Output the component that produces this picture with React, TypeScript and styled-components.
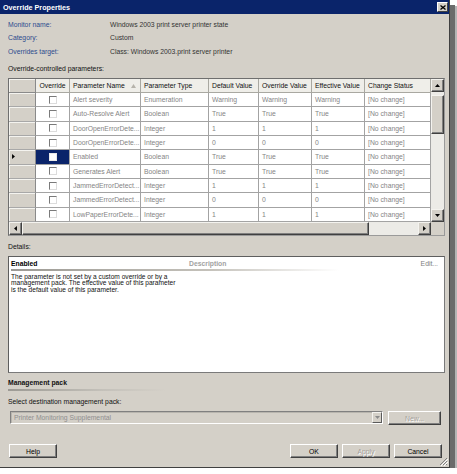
import styled, { createGlobalStyle } from "styled-components";

const GlobalStyle = createGlobalStyle`
  html, body {
    margin: 0;
    padding: 0;
    background: #ffffff;
  }
  body {
    font-family: "Liberation Sans", Arial, sans-serif;
    font-size: 6.8px;
    color: #000;
  }
  * {
    box-sizing: border-box;
  }
`;

const Window = styled.div`
  position: relative;
  width: 450px;
  height: 468px;
  background: #d4d0c8;
  display: flex;
  flex-direction: column;
  border-right: 1px solid #404040;
  border-bottom: 1px solid #404040;
  box-shadow: 5px 5px 0 #6b6b6b, 7px 6px 0 #b4b4b4;
`;

const TitleBar = styled.div`
  height: 14px;
  flex: 0 0 14px;
  background: #0a246a;
  color: #fff;
  font-weight: bold;
  font-size: 7.2px;
  display: flex;
  align-items: center;
  justify-content: space-between;
  padding: 0 1px 0 3px;
`;

const CloseButton = styled.div`
  width: 11px;
  height: 10px;
  background: #d4d0c8;
  border: 1px solid;
  border-color: #fff #404040 #404040 #fff;
  display: flex;
  align-items: center;
  justify-content: center;
`;

const Content = styled.div`
  flex: 1;
  display: flex;
  flex-direction: column;
  padding: 0 4px 0 8px;
`;

const InfoGrid = styled.div`
  display: grid;
  grid-template-columns: 102px 1fr;
  grid-auto-rows: 13.5px;
  align-items: center;
  margin-top: 3.5px;
`;

const InfoLabel = styled.div`
  color: #2c4b8e;
`;

const InfoValue = styled.div`
  color: #333;
`;

const SectionLabel = styled.div<{ $gap: number; $bold?: boolean }>`
  height: 10px;
  line-height: 10px;
  margin-top: ${(p) => p.$gap}px;
  font-weight: ${(p) => (p.$bold ? "bold" : "normal")};
  color: #111;
`;

const FadeRule = styled.div<{ $width: number; $gap: number }>`
  height: 2px;
  width: ${(p) => p.$width}px;
  margin-top: ${(p) => p.$gap}px;
  background: linear-gradient(to right, #9c9a94, #c4c1ba 60%, rgba(255, 255, 255, 0));
`;

/* ---------- data grid ---------- */

const GridFrame = styled.div`
  margin-top: 4px;
  width: 437px;
  height: 158px;
  border: 1px solid;
  border-color: #6f6f6f #9a9a9a #9a9a9a #6f6f6f;
  display: flex;
  flex-direction: column;
  background: #d4d0c8;
`;

const GridTop = styled.div`
  display: flex;
  height: 143px;
`;

const Table = styled.div`
  flex: 0 0 422px;
  display: grid;
  grid-template-columns: 27px 34px 71px 68px 50px 53px 53px 66px;
  grid-template-rows: 14px repeat(9, 14.33px);
  background: #fff;
`;

const HeadCell = styled.div<{ $center?: boolean }>`
  background: #efeee9;
  border-right: 1px solid #a9a8a1;
  border-bottom: 1px solid #a9a8a1;
  display: flex;
  align-items: center;
  justify-content: ${(p) => (p.$center ? "center" : "flex-start")};
  padding: 0 3px;
  white-space: nowrap;
  overflow: hidden;
  color: #111;
`;

const CornerCell = styled.div`
  background: #d4d0c8;
  border-right: 1px solid #8a8a8a;
  border-bottom: 1px solid #8a8a8a;
  box-shadow: inset 1px 1px 0 #f4f3ef;
`;

const RowHead = styled.div`
  background: #d4d0c8;
  border-right: 1px solid #8a8a8a;
  border-bottom: 1px solid #a8a8a8;
  box-shadow: inset 1px 1px 0 #f4f3ef;
  display: flex;
  align-items: center;
  padding-left: 3px;
`;

const DataCell = styled.div`
  border-right: 1px solid #a3a3a3;
  border-bottom: 1px solid #a3a3a3;
  color: #858585;
  padding: 0 3px;
  display: flex;
  align-items: center;
  white-space: nowrap;
  overflow: hidden;
`;

const CheckCell = styled.div<{ $selected?: boolean }>`
  border-right: 1px solid #a3a3a3;
  border-bottom: 1px solid #a3a3a3;
  background: ${(p) => (p.$selected ? "#0a246a" : "#fff")};
  display: flex;
  align-items: center;
  justify-content: center;
`;

const Checkbox = styled.span<{ $selected?: boolean }>`
  width: 8px;
  height: 8px;
  background: #fff;
  border: 1px solid;
  border-color: ${(p) =>
    p.$selected ? "#e8e8e8" : "#7a7a7a #dcdcdc #dcdcdc #7a7a7a"};
`;

const SortArrow = styled.svg`
  margin-left: auto;
  margin-right: 1px;
`;

const VScroll = styled.div`
  flex: 0 0 13px;
  display: flex;
  flex-direction: column;
  background: #ecebe7;
`;

const HScrollRow = styled.div`
  display: flex;
  height: 13px;
`;

const HScroll = styled.div`
  flex: 1;
  display: flex;
  background: #ecebe7;
`;

const ScrollCorner = styled.div`
  flex: 0 0 13px;
  background: #d4d0c8;
`;

const ArrowButton = styled.div<{ $size: number }>`
  flex: 0 0 ${(p) => p.$size}px;
  width: ${(p) => p.$size}px;
  height: ${(p) => p.$size}px;
  background: #d4d0c8;
  border: 1px solid;
  border-color: #f4f3ef #404040 #404040 #f4f3ef;
  box-shadow: inset -1px -1px 0 #808080;
  display: flex;
  align-items: center;
  justify-content: center;
`;

const Thumb = styled.div<{ $length: number; $vertical?: boolean }>`
  flex: 0 0 ${(p) => p.$length}px;
  background: #d4d0c8;
  border: 1px solid;
  border-color: #f4f3ef #404040 #404040 #f4f3ef;
  box-shadow: inset -1px -1px 0 #808080;
`;

const TrackGap = styled.div<{ $length: number }>`
  flex: 0 0 ${(p) => p.$length}px;
`;

const TrackFill = styled.div`
  flex: 1;
`;

/* ---------- details panel ---------- */

const DetailsPanel = styled.div`
  margin-top: 4px;
  width: 437px;
  height: 117px;
  background: #fff;
  border: 1px solid;
  border-color: #5e5e5e #7a7a7a #7a7a7a #5e5e5e;
  padding: 2px 6px 0 2px;
  display: flex;
  flex-direction: column;
`;

const PanelHeader = styled.div`
  display: flex;
  align-items: center;
  height: 9px;
`;

const PanelTitle = styled.div`
  width: 178px;
  font-weight: bold;
  color: #000;
`;

const PanelColumn = styled.div`
  flex: 1;
  font-weight: bold;
  color: #a2a2a2;
`;

const EditLink = styled.div`
  color: #7d7d7d;
`;

const PanelText = styled.p`
  margin: 3px 0 0 0;
  font-size: 6.6px;
  line-height: 6.4px;
  color: #111;
`;

/* ---------- bottom ---------- */

const ComboRow = styled.div`
  display: flex;
  gap: 5px;
  margin: 4px 0 0 2px;
`;

const Combo = styled.div`
  flex: 0 0 373px;
  height: 13px;
  display: flex;
  align-items: center;
  justify-content: space-between;
  border: 1px solid;
  border-color: #808080 #fff #fff #808080;
  box-shadow: inset 1px 1px 0 #b8b5ae;
  background: #d4d0c8;
  color: #8f8f8f;
  padding: 0 0 0 3px;
`;

const ComboDrop = styled.div`
  width: 10px;
  height: 11px;
  background: #d4d0c8;
  border: 1px solid;
  border-color: #f4f3ef #5a5a5a #5a5a5a #f4f3ef;
  display: flex;
  align-items: center;
  justify-content: center;
`;

const ButtonRow = styled.div`
  display: flex;
  gap: 4px;
  margin: 19px 3px 0 1px;
`;

const Spacer = styled.div`
  flex: 1;
`;

const Button = styled.div<{ $disabled?: boolean; $width?: number }>`
  width: ${(p) => p.$width ?? 48}px;
  height: 14px;
  background: #d4d0c8;
  border: 1px solid;
  border-color: #fff #404040 #404040 #fff;
  box-shadow: inset -1px -1px 0 #808080;
  display: flex;
  align-items: center;
  justify-content: center;
  color: ${(p) => (p.$disabled ? "#a4a19a" : "#000")};
  text-shadow: ${(p) => (p.$disabled ? "1px 1px 0 #fff" : "none")};
`;

const Grip = styled.svg`
  position: absolute;
  right: 1px;
  bottom: 1px;
`;

const columns = [
  "Override",
  "Parameter Name",
  "Parameter Type",
  "Default Value",
  "Override Value",
  "Effective Value",
  "Change Status",
];

const rows = [
  ["Alert severity", "Enumeration", "Warning", "Warning", "Warning"],
  ["Auto-Resolve Alert", "Boolean", "True", "True", "True"],
  ["DoorOpenErrorDete...", "Integer", "1", "1", "1"],
  ["DoorOpenErrorDete...", "Integer", "0", "0", "0"],
  ["Enabled", "Boolean", "True", "True", "True"],
  ["Generates Alert", "Boolean", "True", "True", "True"],
  ["JammedErrorDetect...", "Integer", "1", "1", "1"],
  ["JammedErrorDetect...", "Integer", "0", "0", "0"],
  ["LowPaperErrorDete...", "Integer", "1", "1", "1"],
];

const SELECTED = 4;

function Arrow({ dir, color = "#000" }: { dir: "up" | "down" | "left" | "right"; color?: string }) {
  const points = {
    up: "0,4 3.5,0 7,4",
    down: "0,0 7,0 3.5,4",
    left: "4,0 4,7 0,3.5",
    right: "0,0 0,7 4,3.5",
  }[dir];
  const vertical = dir === "up" || dir === "down";
  return (
    <svg width={vertical ? 5 : 3} height={vertical ? 3 : 5} viewBox={vertical ? "0 0 7 4" : "0 0 4 7"}>
      <polygon points={points} fill={color} />
    </svg>
  );
}

export default function App() {
  return (
    <>
      <GlobalStyle />
      <Window>
        <TitleBar>
          <span>Override Properties</span>
          <CloseButton>
            <svg width="6" height="5" viewBox="0 0 6 5">
              <path d="M0.5 0.5 L5.5 4.5 M5.5 0.5 L0.5 4.5" stroke="#000" strokeWidth="1.3" />
            </svg>
          </CloseButton>
        </TitleBar>

        <Content>
          <InfoGrid>
            <InfoLabel>Monitor name:</InfoLabel>
            <InfoValue>Windows 2003 print server printer state</InfoValue>
            <InfoLabel>Category:</InfoLabel>
            <InfoValue>Custom</InfoValue>
            <InfoLabel>Overrides target:</InfoLabel>
            <InfoValue>Class: Windows 2003.print server printer</InfoValue>
          </InfoGrid>

          <SectionLabel $gap={6}>Override-controlled parameters:</SectionLabel>

          <GridFrame>
            <GridTop>
              <Table>
                <CornerCell />
                {columns.map((c, i) => (
                  <HeadCell key={c} $center={i === 0}>
                    {c}
                    {c === "Parameter Name" && (
                      <SortArrow width="5" height="4" viewBox="0 0 5 4">
                        <polygon points="0,4 2.5,0 5,4" fill="#b6b3ab" />
                      </SortArrow>
                    )}
                  </HeadCell>
                ))}
                {rows.map((r, i) => {
                  const sel = i === SELECTED;
                  return [
                    <RowHead key={`h${i}`}>{sel && <Arrow dir="right" />}</RowHead>,
                    <CheckCell key={`c${i}`} $selected={sel}>
                      <Checkbox $selected={sel} />
                    </CheckCell>,
                    ...r.map((v, j) => <DataCell key={`d${i}-${j}`}>{v}</DataCell>),
                    <DataCell key={`s${i}`}>[No change]</DataCell>,
                  ];
                })}
              </Table>
              <VScroll>
                <ArrowButton $size={13}>
                  <Arrow dir="up" />
                </ArrowButton>
                <TrackGap $length={3} />
                <Thumb $length={39} $vertical />
                <TrackFill />
                <ArrowButton $size={13}>
                  <Arrow dir="down" />
                </ArrowButton>
              </VScroll>
            </GridTop>
            <HScrollRow>
              <HScroll>
                <ArrowButton $size={13}>
                  <Arrow dir="left" />
                </ArrowButton>
                <Thumb $length={347} />
                <TrackFill />
                <ArrowButton $size={13}>
                  <Arrow dir="right" />
                </ArrowButton>
              </HScroll>
              <ScrollCorner />
            </HScrollRow>
          </GridFrame>

          <SectionLabel $gap={6}>Details:</SectionLabel>

          <DetailsPanel>
            <PanelHeader>
              <PanelTitle>Enabled</PanelTitle>
              <PanelColumn>Description</PanelColumn>
              <EditLink>Edit...</EditLink>
            </PanelHeader>
            <FadeRule $width={328} $gap={1} />
            <PanelText>
              The parameter is not set by a custom override or by a
              <br />
              management pack. The effective value of this parameter
              <br />
              is the default value of this parameter.
            </PanelText>
          </DetailsPanel>

          <SectionLabel $gap={5} $bold>
            Management pack
          </SectionLabel>
          <FadeRule $width={158} $gap={1} />

          <SectionLabel $gap={6}>Select destination management pack:</SectionLabel>

          <ComboRow>
            <Combo>
              <span>Printer Monitoring Supplemental</span>
              <ComboDrop>
                <Arrow dir="down" color="#8a8a8a" />
              </ComboDrop>
            </Combo>
            <Button $disabled $width={53}>
              New...
            </Button>
          </ComboRow>

          <ButtonRow>
            <Button>Help</Button>
            <Spacer />
            <Button>OK</Button>
            <Button $disabled>Apply</Button>
            <Button>Cancel</Button>
          </ButtonRow>
        </Content>

        <Grip width="9" height="9" viewBox="0 0 9 9">
          <path d="M8 1 L1 8 M8 4 L4 8 M8 7 L7 8" stroke="#808080" strokeWidth="1" />
          <path d="M9 2 L2 9 M9 5 L5 9" stroke="#fff" strokeWidth="1" />
        </Grip>
      </Window>
    </>
  );
}
